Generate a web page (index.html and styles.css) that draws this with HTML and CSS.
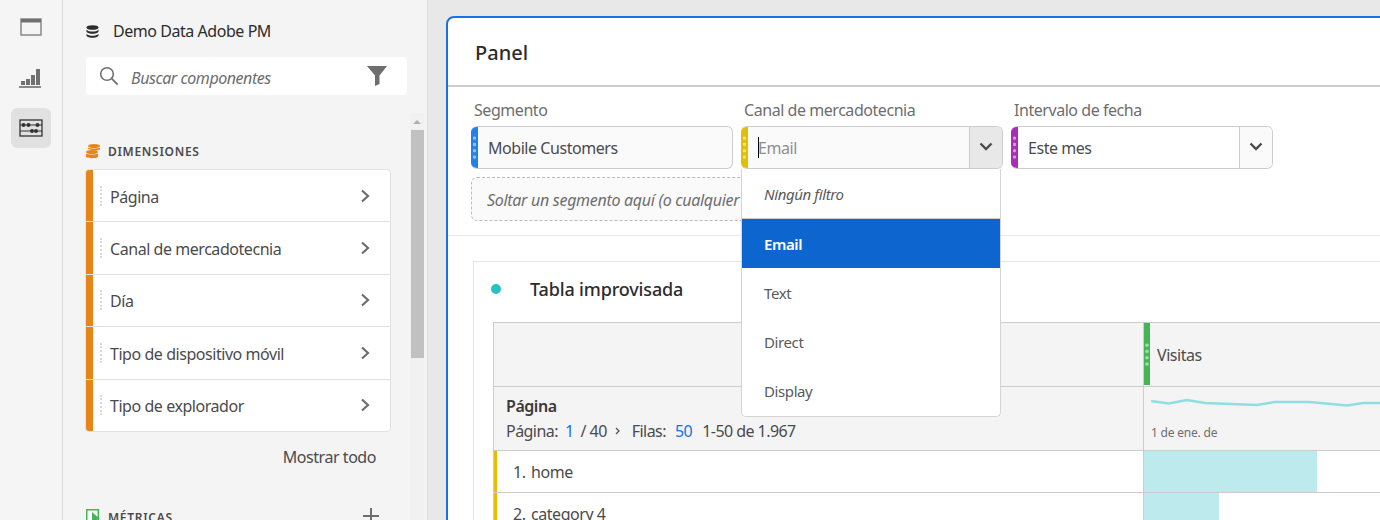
FILE: index.html

```html
<html>
    <head>
        <meta charset="utf-8">
        <link rel="stylesheet" href="styles.css">
    </head>

    <body>
        <div id="app">
            <!-- icon rail -->
            <div class="rail">
                <div class="rail-btn">
                    <svg width="22" height="20" viewBox="0 0 22 20"><rect x="1" y="1" width="20" height="16" fill="none" stroke="#888" stroke-width="1.5"/><rect x="1" y="1" width="20" height="3.5" fill="#707070"/></svg>
                </div>
                <div class="rail-btn">
                    <svg width="24" height="20" viewBox="0 0 24 20"><path fill="#707070" d="M2 13h4v4H2zM7 11h4v6H7zM12 7h4v10h-4zM17 1h4v16h-4z"/><rect x="0" y="18" width="22" height="2" fill="#888"/></svg>
                </div>
                <div class="rail-btn active">
                    <svg width="24" height="18" viewBox="0 0 24 18"><rect x="1" y="1" width="22" height="16" fill="none" stroke="#333" stroke-width="1.3"/><path stroke="#333" stroke-width="1.2" d="M1 6h22M1 12h22"/><g fill="#333"><circle cx="4.500" cy="6" r="2"/><circle cx="9.500" cy="6" r="2"/><circle cx="18.500" cy="6" r="2"/><circle cx="13" cy="12" r="2"/><circle cx="17" cy="12" r="2"/></g></svg>
                </div>
            </div>

            <!-- components panel -->
            <div class="side">
                <div class="suite">
                    <svg width="13" height="13" viewBox="0 0 13 13"><g fill="#2c2c2c"><ellipse cx="6.500" cy="2.500" rx="6" ry="2.300"/><path d="M.5 4.500c1 1.600 3.500 2.100 6 2.100s5-.5 6-2.100v2.300c-1 1.500-3.500 2-6 2s-5-.5-6-2z"/><path d="M.5 8.700c1 1.500 3.500 2 6 2s5-.5 6-2v2c-1 1.500-3.500 2-6 2s-5-.5-6-2z"/></g></svg>
                    <span>Demo Data Adobe PM</span>
                </div>
                <div class="search">
                    <svg width="20" height="20" viewBox="0 0 20 20"><circle cx="8" cy="8" r="6.300" fill="none" stroke="#707070" stroke-width="1.600"/><path d="M12.700 12.700l6 6" stroke="#707070" stroke-width="1.800"/></svg>
                    <span class="search-text">Buscar componentes</span>
                    <svg class="funnel" width="20" height="20" viewBox="0 0 20 20"><path fill="#6e6e6e" d="M0 0h20l-7.500 9.500V18l-4.500 2V9.500z"/></svg>
                </div>

                <div class="section-head dims">
                    <svg width="14" height="15" viewBox="0 0 14 15"><g fill="#e68619"><ellipse cx="8" cy="2" rx="6" ry="2"/><path d="M2 3.800c1.500 1 10.500 1 12 0v1.500c-1 1-3 1.200-5 1.200-1 0-2-.1-3-.3C4.500 5.700 3 5.500 2 5z"/><ellipse cx="6" cy="8" rx="6" ry="2"/><path d="M0 9.500c1.500 1.300 10.500 1.300 12 0V13c-1.500 1.600-10.500 1.600-12 0z"/></g></svg>
                    <span>DIMENSIONES</span>
                </div>
                <div class="list">
                    <div class="list-row"><i class="strip"></i><i class="handle"></i><span class="row-name">Página</span><svg class="chev" width="10" height="14" viewBox="0 0 10 14"><path d="M2 1.500L8 7l-6 5.500" fill="none" stroke="#6e6e6e" stroke-width="2.200"/></svg></div>
                    <div class="list-row"><i class="strip"></i><i class="handle"></i><span class="row-name">Canal de mercadotecnia</span><svg class="chev" width="10" height="14" viewBox="0 0 10 14"><path d="M2 1.500L8 7l-6 5.500" fill="none" stroke="#6e6e6e" stroke-width="2.200"/></svg></div>
                    <div class="list-row"><i class="strip"></i><i class="handle"></i><span class="row-name">Día</span><svg class="chev" width="10" height="14" viewBox="0 0 10 14"><path d="M2 1.500L8 7l-6 5.500" fill="none" stroke="#6e6e6e" stroke-width="2.200"/></svg></div>
                    <div class="list-row"><i class="strip"></i><i class="handle"></i><span class="row-name">Tipo de dispositivo móvil</span><svg class="chev" width="10" height="14" viewBox="0 0 10 14"><path d="M2 1.500L8 7l-6 5.500" fill="none" stroke="#6e6e6e" stroke-width="2.200"/></svg></div>
                    <div class="list-row"><i class="strip"></i><i class="handle"></i><span class="row-name">Tipo de explorador</span><svg class="chev" width="10" height="14" viewBox="0 0 10 14"><path d="M2 1.500L8 7l-6 5.500" fill="none" stroke="#6e6e6e" stroke-width="2.200"/></svg></div>
                </div>
                <div class="show-all">Mostrar todo</div>
                <div class="section-head metrics">
                    <svg width="14" height="14" viewBox="0 0 14 14"><rect x=".75" y=".75" width="11.500" height="12.500" fill="#fff" stroke="#44b556" stroke-width="1.500"/><path fill="#44b556" d="M6 3l8 7-3 .5V14H6z"/></svg>
                    <span>MÉTRICAS</span>
                    <svg class="plus" width="16" height="16" viewBox="0 0 16 16"><path d="M8 0v16M0 8h16" stroke="#6e6e6e" stroke-width="2"/></svg>
                </div>

                <div class="scrollbar">
                    <i class="scroll-up"></i>
                    <div class="scroll-thumb"></div>
                </div>
            </div>

            <!-- workspace -->
            <div class="main">
                <div class="panel">
                    <div class="panel-title">Panel</div>
                    <div class="filters">
                        <div class="filter-row">
                            <div class="filter">
                                <label>Segmento</label>
                                <div class="box">
                                    <i class="tag blue"></i>
                                    <span class="box-val">Mobile Customers</span>
                                </div>
                            </div>
                            <div class="filter">
                                <label>Canal de mercadotecnia</label>
                                <div class="box">
                                    <i class="tag yellow"></i>
                                    <span class="box-val placeholder"><i class="caret"></i>Email</span>
                                    <span class="box-btn open"><svg width="14" height="9" viewBox="0 0 14 9"><path d="M1.500 1.500L7 7l5.500-5.500" fill="none" stroke="#4b4b4b" stroke-width="2.400"/></svg></span>
                                </div>
                                <div class="menu">
                                    <div class="menu-item none">Ningún filtro</div>
                                    <div class="menu-item selected">Email</div>
                                    <div class="menu-item">Text</div>
                                    <div class="menu-item">Direct</div>
                                    <div class="menu-item">Display</div>
                                </div>
                            </div>
                            <div class="filter">
                                <label>Intervalo de fecha</label>
                                <div class="box white">
                                    <i class="tag purple"></i>
                                    <span class="box-val">Este mes</span>
                                    <span class="box-btn"><svg width="14" height="9" viewBox="0 0 14 9"><path d="M1.500 1.500L7 7l5.500-5.500" fill="none" stroke="#4b4b4b" stroke-width="2.400"/></svg></span>
                                </div>
                            </div>
                        </div>
                        <div class="drop-zone">Soltar un segmento aquí (o cualquier</div>
                    </div>

                    <div class="viz">
                        <div class="viz-title"><i class="dot"></i><span>Tabla improvisada</span></div>
                        <div class="table">
                            <div class="cell head-l"></div>
                            <div class="cell head-r"><i class="tag green"></i><span>Visitas</span></div>
                            <div class="cell sum-l">
                                <div class="dim-name">Página</div>
                                <div class="pager">
                                    <span>Página:</span><b>1</b><span>/ 40</span>
                                    <svg width="6" height="8" viewBox="0 0 6 8"><path d="M1 1l3 3-3 3" fill="none" stroke="#555" stroke-width="1.300"/></svg>
                                    <span>Filas:</span><b class="rows-val">50</b><span>1-50 de 1.967</span>
                                </div>
                            </div>
                            <div class="cell sum-r">
                                <svg class="spark" width="240" height="8" viewBox="0 0 240 8"><polyline points="0,2 18,4.500 36,1 54,4 106,6 124,3 159,3 196,6.500 212,4 240,4" fill="none" stroke="#8fdfe2" stroke-width="2.500"/></svg>
                                <div class="spark-label">1 de ene. de</div>
                            </div>
                            <div class="cell row-l"><i class="row-strip"></i><span class="row-num">1.</span><span>home</span></div>
                            <div class="cell row-r"><div class="bar" style="width:173px"></div></div>
                            <div class="cell row-l"><i class="row-strip"></i><span class="row-num">2.</span><span>category 4</span></div>
                            <div class="cell row-r"><div class="bar" style="width:75px"></div></div>
                        </div>
                    </div>
                </div>
            </div>
        </div>
    </body>
</html>
```

FILE: styles.css

```css
html, body {
    margin: 0;
    padding: 0;
    height: 100%;
    overflow: hidden;
}
body {
    font-family: "Noto Sans", sans-serif;
    font-size: 16px;
    letter-spacing: -.45px;
    color: #4b4b4b;
    background: #e8e8e8;
}
i {
    display: block;
    font-style: normal;
}
#app {
    display: flex;
    width: 1380px;
    height: 520px;
    overflow: hidden;
}

/* rail */
.rail {
    width: 62px;
    flex: none;
    background: #f5f5f5;
    border-right: 1px solid #dcdcdc;
    display: flex;
    flex-direction: column;
    align-items: center;
    padding-top: 8px;
}
.rail-btn {
    width: 40px;
    height: 40px;
    border-radius: 6px;
    display: flex;
    align-items: center;
    justify-content: center;
    margin-bottom: 10px;
}
.rail-btn.active {
    background: #e1e1e1;
}

/* side panel */
.side {
    width: 365px;
    flex: none;
    position: relative;
    background: #f4f4f4;
    border-right: 1px solid #dcdcdc;
    padding: 0 36px 0 23px;
    box-sizing: border-box;
}
.suite {
    display: flex;
    align-items: center;
    height: 24px;
    margin-top: 19px;
    color: #2c2c2c;
}
.suite span {
    margin-left: 14px;
}
.search {
    display: flex;
    align-items: center;
    width: 321px;
    height: 38px;
    margin-top: 14px;
    background: #fff;
    border-radius: 4px;
    padding: 0 20px 0 13px;
    box-sizing: border-box;
    color: #6e6e6e;
}
.search-text {
    font-style: italic;
    margin: 3px 0 0 12px;
    flex: 1;
}
.section-head {
    display: flex;
    align-items: center;
    font-size: 12px;
    font-weight: 600;
    letter-spacing: .7px;
    color: #4b4b4b;
}
.section-head span {
    margin-left: 8px;
}
.dims {
    margin-top: 46px;
    height: 20px;
}
.list {
    width: 306px;
    margin: 8px 0 0 -1px;
    background: #fff;
    border: 1px solid #e1e1e1;
    border-radius: 4px;
    overflow: hidden;
    box-sizing: border-box;
}
.list-row {
    display: flex;
    align-items: center;
    height: 52.400px;
    border-bottom: 1px solid #e1e1e1;
    box-sizing: border-box;
}
.list-row:last-child {
    border-bottom: 0;
    height: 51px;
}
.row-name {
    padding-top: 2px;
}
.strip {
    width: 7px;
    align-self: stretch;
    background: #e68619;
}
.handle {
    width: 0;
    height: 20px;
    margin-left: 7px;
    border-left: 2px dotted #d8d8d8;
    margin-right: 8px;
}
.chev {
    margin-left: auto;
    margin-right: 20px;
}
.show-all {
    width: 290px;
    margin-top: 14px;
    text-align: right;
    line-height: 22px;
}
.metrics {
    margin-top: 41px;
    width: 293px;
}
.metrics svg {
    margin-top: -2px;
}
.plus {
    margin-left: auto;
}
.scrollbar {
    position: absolute;
    left: 347px;
    top: 113px;
    bottom: 0;
    width: 14px;
    background: #f1f1f1;
}
.scroll-up {
    width: 0;
    height: 0;
    margin: 7px auto 6px;
    border-left: 4px solid transparent;
    border-right: 4px solid transparent;
    border-bottom: 4px solid #b0b0b0;
}
.scroll-thumb {
    height: 228px;
    margin-left: 1px;
    background: #c1c1c1;
}

/* workspace */
.main {
    flex: 1;
    min-width: 0;
    padding: 16px 0 0 18px;
}
.panel {
    width: 960px;
    height: 600px;
    background: #fff;
    border: 2px solid #1473e6;
    border-radius: 8px;
    box-sizing: border-box;
}
.panel-title {
    height: 69px;
    padding: 0 0 0 27px;
    box-sizing: border-box;
    border-bottom: 2px solid #ccc;
    font-size: 20px;
    font-weight: 500;
    letter-spacing: 0;
    color: #2c2c2c;
    line-height: 70px;
}
.filters {
    height: 149px;
    padding: 14px 0 0 23px;
    box-sizing: border-box;
    border-bottom: 1px solid #e8e8e8;
}
.filter-row {
    display: flex;
    gap: 8px;
}
.filter {
    position: relative;
    width: 262px;
}
.filter label {
    display: block;
    height: 25px;
    line-height: 18px;
    padding-left: 3px;
    color: #6e6e6e;
}
.box {
    display: flex;
    height: 43px;
    background: #fafafa;
    border: 1px solid #ccc;
    border-left: 0;
    border-radius: 6px;
    box-sizing: border-box;
    overflow: hidden;
    align-items: center;
}
.box.white {
    background: #fff;
}
.tag {
    width: 7px;
    align-self: stretch;
    flex: none;
    display: flex;
    align-items: center;
}
.tag::after {
    content: "";
    display: block;
    width: 100%;
    height: 25px;
    background-image: radial-gradient(circle, rgba(255,255,255,.5) 1.500px, transparent 2px);
    background-size: 100% 6.300px;
    background-repeat: repeat-y;
}
.tag.blue { background-color: #2680eb; }
.tag.yellow { background-color: #e2bf00; }
.tag.purple { background-color: #a92eb3; }
.tag.green { background-color: #44b556; }
.box-val {
    margin-left: 10px;
    flex: 1;
    white-space: nowrap;
    display: flex;
    align-items: center;
}
.placeholder {
    color: #8e8e8e;
}
.caret {
    width: 1px;
    height: 21px;
    background: #000;
    margin-right: -1px;
}
.box-btn {
    width: 33px;
    align-self: stretch;
    flex: none;
    display: flex;
    align-items: center;
    justify-content: center;
    border-left: 1px solid #ccc;
    background: #fafafa;
    box-sizing: border-box;
}
.box-btn.open {
    background: #e8e8e8;
}
.box-btn svg {
    margin-top: -3px;
}
.menu {
    position: absolute;
    left: 0;
    top: 68px;
    width: 260px;
    height: 248px;
    background: #fff;
    border: 1px solid #d4d4d4;
    border-top: 0;
    border-radius: 0 0 5px 5px;
    box-sizing: border-box;
    z-index: 5;
    font-size: 15px;
    letter-spacing: -.4px;
}
.menu-item {
    height: 49px;
    line-height: 50px;
    padding-left: 22px;
    color: #5a5a5a;
}
.menu-item.none {
    height: 50px;
    line-height: 50px;
    font-style: italic;
    border-bottom: 1px solid #ccc;
    box-sizing: border-box;
}
.menu-item.selected {
    background: #0d66d0;
    color: #fff;
    font-weight: 600;
}
.drop-zone {
    width: 500px;
    height: 44px;
    line-height: 44px;
    margin-top: 8px;
    padding-left: 15px;
    box-sizing: border-box;
    border: 1px dashed #bbb;
    border-radius: 6px;
    background: #fafafa;
    font-style: italic;
    letter-spacing: -.3px;
    color: #6e6e6e;
    white-space: nowrap;
    overflow: hidden;
}

/* freeform table */
.viz {
    margin: 25px 0 0 25px;
    border: 1px solid #e4e4e4;
    height: 400px;
    padding: 0 0 0 19px;
}
.viz-title {
    display: flex;
    align-items: center;
    height: 54px;
    margin-bottom: 6px;
    font-size: 18px;
    font-weight: 500;
    letter-spacing: -.15px;
    color: #2c2c2c;
}
.dot {
    width: 10px;
    height: 10px;
    border-radius: 50%;
    background: #26c0c7;
    margin: 0 29px 0 -2px;
}
.table {
    display: grid;
    grid-template-columns: 649px 1fr;
    grid-template-rows: 64px 64px 42px 42px;
    border-top: 1px solid #ccc;
    border-left: 1px solid #ccc;
}
.cell {
    box-sizing: border-box;
    border-bottom: 1px solid #ccc;
}
.head-l, .sum-l {
    background: #f4f4f4;
}
.head-r, .sum-r {
    background: #f4f4f4;
    border-left: 1px solid #ccc;
}
.head-r {
    display: flex;
    align-items: center;
}
.head-r .tag {
    width: 6px;
    margin: 0 7px 1px 0;
}
.sum-l {
    padding: 8px 0 0 12px;
}
.dim-name {
    font-weight: 600;
    color: #3a3a3a;
    line-height: 22px;
}
.pager {
    display: flex;
    align-items: center;
    gap: 7px;
    line-height: 24px;
    margin-top: 2px;
    letter-spacing: -.55px;
}
.pager svg {
    margin: 0 4px 0 1px;
}
.pager b {
    font-weight: 400;
    color: #1473e6;
}
.pager .rows-val {
    margin-left: 2px;
}
.pager b + span:last-child {
    margin-left: 3px;
}
.sum-r {
    padding: 12px 0 0 7px;
}
.spark {
    display: block;
}
.spark-label {
    font-size: 12px;
    letter-spacing: -.2px;
    color: #6e6e6e;
    margin-top: 17px;
}
.row-l {
    display: flex;
    align-items: center;
}
.row-strip {
    width: 3px;
    align-self: stretch;
    background: #e2bf00;
    margin-right: 16px;
}
.row-num {
    width: 12px;
    text-align: right;
    margin-right: 6px;
}
.row-r {
    border-left: 1px solid #ccc;
}
.bar {
    height: 100%;
    background: #bdebed;
}
```
